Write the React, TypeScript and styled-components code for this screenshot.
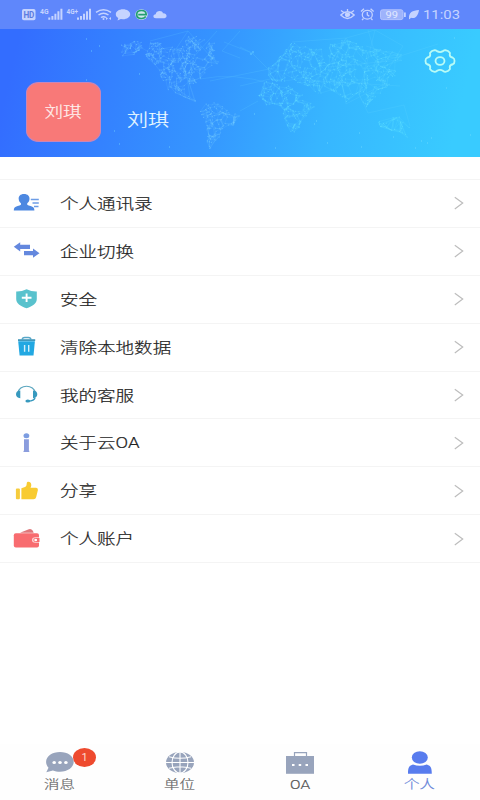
import React from 'react';
import styled, { createGlobalStyle } from 'styled-components';

const Global = createGlobalStyle`
  * { box-sizing: border-box; }
  body { margin: 0; background: #fff; font-family: Roboto, "Noto Sans CJK SC", sans-serif; }
`;

const Screen = styled.div`
  width: 480px;
  height: 800px;
  display: flex;
  flex-direction: column;
  background: #fff;
  overflow: hidden;
`;

const StatusBar = styled.div`
  height: 29px;
  flex: none;
  background: #5f87fb;
`;

const StatusArt = styled.svg`
  display: block;
  width: 480px;
  height: 29px;
`;

const Header = styled.header`
  position: relative;
  height: 128px;
  flex: none;
  display: flex;
  align-items: flex-start;
  padding: 53px 24px 0 26px;
  background: linear-gradient(103deg, #336dff 4%, #3596ff 45%, #37b6ff 68%, #39cbff 94%);
`;

const MapArt = styled.svg`
  position: absolute;
  inset: 0;
  width: 480px;
  height: 128px;
`;

const Avatar = styled.div`
  position: relative;
  width: 75px;
  height: 60px;
  border-radius: 13px / 11px;
  background: #f87978;
  border: 1px solid #c886b8;
  display: flex;
  align-items: center;
  justify-content: center;
`;

const Wide = styled.span<{ $size: number; $x?: number; $color: string; $origin?: string }>`
  display: inline-block;
  font-size: ${p => p.$size}px;
  line-height: 1;
  font-weight: 300;
  -webkit-text-stroke: 0.2px currentColor;
  white-space: nowrap;
  color: ${p => p.$color};
  transform: scaleX(${p => p.$x ?? 1.235});
  transform-origin: ${p => p.$origin ?? 'left'} center;
`;

const UserName = styled.div`
  position: relative;
  margin: 30px 0 0 26px;
  line-height: 1;
`;

const SettingsButton = styled.button`
  position: relative;
  width: 32px;
  height: 26px;
  margin: -34px 0 0 auto;
  padding: 0;
  border: 0;
  background: none;
`;

const Menu = styled.ul`
  list-style: none;
  margin: 22px 0 0;
  padding: 0;
  border-top: 1px solid #f4f4f4;
`;

const Row = styled.li`
  height: 47.9px;
  display: flex;
  align-items: center;
  padding: 0 16px 0 12px;
  border-bottom: 1px solid #f4f4f4;
`;

const RowIcon = styled.span`
  display: flex;
  width: 30px;
  height: 24px;
  margin-right: 18px;
`;

const RowLabel = styled.div`
  display: flex;
  padding-top: 2px;
`;

const Chevron = styled.svg`
  width: 10px;
  height: 14px;
  margin-left: auto;
`;

const Tabs = styled.nav`
  margin-top: auto;
  height: 56px;
  flex: none;
  display: grid;
  grid-template-columns: repeat(4, 1fr);
  background: #fefefe;
`;

const Tab = styled.div`
  position: relative;
  display: flex;
  flex-direction: column;
  align-items: center;
  padding-top: 6px;
  gap: 4px;
`;

const TabIcon = styled.svg`
  width: 30px;
  height: 25px;
`;

const Badge = styled.span`
  position: absolute;
  left: 73px;
  top: 4px;
  width: 23px;
  height: 19px;
  border-radius: 50%;
  background: #ee4a2e;
  color: #ffd9d0;
  font-size: 11px;
  line-height: 19px;
  text-align: center;
`;

type Pt = [number, number];

const continents: { shape: Pt[]; count: number; color: string }[] = [
  { shape: [[119, 44], [138, 39], [160, 43], [178, 49], [190, 34], [214, 43], [218, 63], [205, 74], [198, 84], [190, 88], [182, 93], [200, 103], [188, 101], [168, 90], [160, 76], [157, 66], [140, 58], [122, 57]], count: 340, color: '#78ccff' },
  { shape: [[199, 107], [212, 101], [226, 108], [240, 116], [232, 128], [220, 136], [213, 143], [209, 152], [206, 140], [207, 126], [199, 116]], count: 110, color: '#78cfff' },
  { shape: [[265, 69], [275, 62], [291, 42], [312, 49], [344, 40], [372, 46], [403, 55], [395, 76], [386, 89], [372, 100], [368, 113], [359, 95], [346, 104], [337, 91], [318, 94], [302, 83], [270, 81]], count: 460, color: '#65e0ff' },
  { shape: [[257, 99], [265, 81], [287, 85], [304, 96], [314, 107], [302, 120], [298, 132], [290, 133], [284, 119], [278, 107], [262, 105]], count: 150, color: '#65e0ff' },
  { shape: [[374, 120], [388, 122], [397, 113], [410, 126], [407, 138], [396, 131], [382, 129]], count: 28, color: '#64e6ff' },
];

function inside([x, y]: Pt, shape: Pt[]) {
  let hit = false;
  for (let i = 0, j = shape.length - 1; i < shape.length; j = i++) {
    const [xi, yi] = shape[i];
    const [xj, yj] = shape[j];
    if (yi > y !== yj > y && x < ((xj - xi) * (y - yi)) / (yj - yi) + xi) hit = !hit;
  }
  return hit;
}

function makeRandom(seed: number) {
  let s = seed;
  return () => {
    s = (s * 16807) % 2147483647;
    return s / 2147483647;
  };
}

function buildNetwork() {
  const random = makeRandom(4217);
  return continents.map(({ shape, count, color }) => {
    const xs = shape.map(p => p[0]);
    const ys = shape.map(p => p[1]);
    const x0 = Math.min(...xs), x1 = Math.max(...xs), y0 = Math.min(...ys), y1 = Math.max(...ys);
    const points: Pt[] = [];
    while (points.length < count) {
      const p: Pt = [x0 + random() * (x1 - x0), y0 + random() * (y1 - y0)];
      if (inside(p, shape)) points.push(p);
    }
    let dots = '';
    let links = '';
    points.forEach(([x, y], i) => {
      dots += `M${x.toFixed(1)} ${y.toFixed(1)}h.8`;
      const near = points
        .map((q, j) => ({ q, j, d: Math.hypot(q[0] - x, q[1] - y) }))
        .filter(n => n.j !== i)
        .sort((a, b) => a.d - b.d);
      for (const { q } of [near[3], near[9]]) {
        links += `M${x.toFixed(1)} ${y.toFixed(1)}L${q[0].toFixed(1)} ${q[1].toFixed(1)}`;
      }
    });
    return { dots, links, color };
  });
}

const network = buildNetwork();

const WorldMap = () => (
  <MapArt viewBox="0 29 480 128" aria-hidden>
    {network.map((n, i) => (
      <g key={i} fill="none" stroke={n.color}>
        <path d={n.links} strokeWidth=".5" opacity=".25" />
        <path d={n.dots} strokeWidth=".9" opacity=".62" />
      </g>
    ))}
    <g fill="none" stroke="#6cdcff" strokeWidth=".5" opacity=".33">
      <path d="M188 31L176 49L187 76L190 98M150 41L188 31L217 64M240 31L222 51L240 58M217 31L190 61M200 79Q234 72 272 84M210 81L274 68M224 42L252 53L272 73M240 47L254 54M240 86L270 79" />
      <path d="M292 42L346 38L328 67L400 60M346 38L375 30L359 94M375 30L403 46L380 82M302 80L400 86M318 94L346 38L379 78M366 46L402 57M359 94L368 113L404 105M404 105L410 126M340 72L346 104L386 83M368 30L378 63L438 44M240 111L258 101" />
    </g>
    <path d="M86 39h1M91 51h1M99 46h1M86 80h1M139 74h1M114 131h1M119 144h1M169 147h1M275 148h1M361 147h1M327 143h1M415 148h1M427 143h1M431 138h1M421 141h1M254 114h1M314 124h1M316 121h1M252 52h2M250 54h2M359 133h1M393 137h1M454 38h1M446 88h1M470 135h1" stroke="#7ae0ff" strokeWidth="1" opacity=".7" />
  </MapArt>
);

const StatusIcons = () => (
  <StatusArt viewBox="0 0 480 29" fill="#c5d3ff" fontFamily="Roboto, sans-serif">
    <rect x="22" y="9" width="13.5" height="11.3" rx="1.8" />
    <text x="23.4" y="17.800" fontSize="8.6" fontWeight="700" fill="#5c7be0" textLength="11" lengthAdjust="spacingAndGlyphs">HD</text>
    <text x="40" y="13.6" fontSize="6.5" fontWeight="700" textLength="8.5" lengthAdjust="spacingAndGlyphs">4G</text>
    <path d="M48.3 17.5h2v2.3h-2zM51.4 16h2v3.8h-2zM54.4 13.8h2v6h-2zM57.4 11.2h2v8.6h-2zM60.4 8.7h2v11.1h-2z" />
    <text x="66.5" y="13.6" fontSize="6.5" fontWeight="700" textLength="11.5" lengthAdjust="spacingAndGlyphs">4G+</text>
    <path d="M77 17.5h2v2.3h-2zM80 16h2v3.8h-2zM83 13.8h2v6h-2zM86 11.2h2v8.6h-2zM89 8.7h2v11.1h-2z" />
    <g fill="none" stroke="#c5d3ff" strokeWidth="1.5">
      <path d="M96 12.3q7.500-5 15 0M98.500 15q5-3.500 10 0M101 17.500q2.500-1.700 5 0" />
    </g>
    <circle cx="103.500" cy="19" r="1" />
    <path d="M106 17l2 1.500-2 1.500M111 17l-2 1.500 2 1.500" />
    <path d="M123 9.200c4 0 7.200 2.200 7.200 5s-3.200 5-7.200 5l-2.200-.2-3.300 1.500.8-2.500c-1.500-.8-2.500-2.200-2.500-3.800 0-2.800 3.200-5 7.200-5z" />
    <ellipse cx="141.500" cy="14.500" rx="6.200" ry="5.200" fill="#d0e8ee" />
    <path d="M145.800 16.500q-1.500 2-4.300 2c-3 0-4.800-1.700-4.800-4s1.800-4 4.800-4 4.700 1.500 4.700 4.200h-8" fill="none" stroke="#239e72" strokeWidth="1.700" />
    <path d="M156 18.200c-3.500 0-3.300-3.800-.3-4 .4-4 6.700-4.300 7.300-.8 4-.5 4.800 4.500 1.500 4.800z" />
    <g fill="none" stroke="#c5d3ff" strokeWidth="1.300">
      <path d="M340.800 15q6.700-6.500 13.400 0q-6.700 7-13.400 0zM341 10.500l2.500 1.700M347.500 9v2M354 10.500l-2.500 1.700" />
      <ellipse cx="367.300" cy="14.700" rx="5" ry="4.400" /><path d="M367.300 12v2.800l2 1.500M361 11.500l3-2.700M373.600 11.500l-3-2.700M363.500 18.500l-1.500 1.500M371 18.500l1.500 1.500" />
    </g>
    <ellipse cx="347.500" cy="14.700" rx="2.600" ry="2.300" />
    <rect x="380.500" y="9.800" width="22.500" height="9.800" rx="2" fill="#9eb3fb" stroke="#b2c3ff" />
    <path d="M404 12.500h1.800v4.600H404zM409 19c-.5-7 3.500-8.500 10-9-.8 5.500-3.500 9.200-8 7.700l-1.500 1.500z" />
    <text x="385.500" y="18" fontSize="9.500" fill="#e1e8ff" textLength="12.500" lengthAdjust="spacingAndGlyphs">99</text>
    <text x="423" y="19.400" fontSize="13.500" textLength="37" lengthAdjust="spacingAndGlyphs">11:03</text>
  </StatusArt>
);

const Glyph = ({ children }: { children: React.ReactNode }) => (
  <svg width="30" height="24" viewBox="0 0 30 24">{children}</svg>
);

const items: { label: string; icon: React.ReactNode }[] = [
  {
    label: '个人通讯录',
    icon: <Glyph><path d="M12 3c3.800 0 5.700 2.200 5.500 5-.1 2.300-1.300 3.300-2.200 4.300-.6 1.500.3 2 3.300 2.600 2.800.8 3.800 1.800 3.800 4.500H1.800c0-2.700 1-3.700 3.800-4.500 3-.6 3.900-1.100 3.300-2.600-.9-1-2.100-2-2.200-4.300C6.500 5.200 8.200 3 12 3z" fill="#4d88e1" /><path d="M18.800 8.500h8M20.500 12h6.300M22 15.500h4.500" stroke="#6d9de6" strokeWidth="1.300" /></Glyph>,
  },
  {
    label: '企业切换',
    icon: <Glyph><path d="M1.800 7.700L8.200 3.200v2.500H18v4.200H8.200v2.500zM27.500 14.200L21 18.700v-2.400h-9v-4.200h9V9.600z" fill="#6488de" /></Glyph>,
  },
  {
    label: '安全',
    icon: <Glyph><path d="M14.600 2.200q5 2.500 10.200 2.300V12c0 4.500-4 7.200-10.200 9.300C8.200 19.200 4.200 16.500 4.200 12V4.500q5.400.2 10.400-2.300z" fill="#59c2cd" /><path d="M14.600 6.500v8.500M9.800 10.800h9.700" stroke="#fff" strokeWidth="1.900" /></Glyph>,
  },
  {
    label: '清除本地数据',
    icon: <Glyph><path d="M10.300 4.500q0-2 2.500-2h3.500q2.500 0 2.500 2" fill="none" stroke="#58a7c8" strokeWidth="1.500" /><path d="M6 4.200h17.200v1.800H6z" fill="#4198bb" /><path d="M6.200 6.200h16.700l-1.400 14.300H7.600z" fill="#22a8e2" /><path d="M12.600 10v6.800M16.700 10v6.800" stroke="#d3f0fc" strokeWidth="1.400" /></Glyph>,
  },
  {
    label: '我的客服',
    icon: <Glyph><path d="M6 10C6.500 1 22.500 1 23.300 10" fill="none" stroke="#5ba6bf" strokeWidth="1.200" /><path d="M8.300 7.500v7.700C5.500 15.200 4 13.500 4 11.300s1.600-3.800 4.300-3.800zM21 7.500v7.700c2.800 0 4.300-1.700 4.300-3.900S23.700 7.500 21 7.500z" fill="#3799be" /><path d="M23.200 14.500q-.8 3.300-7 3.700" fill="none" stroke="#3799be" strokeWidth="1.200" /><ellipse cx="15.800" cy="18" rx="2.400" ry="1.500" fill="#3799be" /></Glyph>,
  },
  {
    label: '关于云OA',
    icon: <Glyph><ellipse cx="14.400" cy="4.700" rx="2.900" ry="2.500" fill="#7c9de1" /><path d="M12 8.300h4.900v11.500h.4v1.100h-5.800v-1.100h.5z" fill="#8b9ddd" /></Glyph>,
  },
  {
    label: '分享',
    icon: <Glyph><rect x="3.900" y="9.500" width="4" height="10.800" rx="1" fill="#f6cc3c" /><path d="M9.400 9.300l3.600-1.200c1.800-.8 1.600-2.700 1.800-4 .2-2 4.500-1.700 4.500 1.800 0 1.200-.4 1.900-.8 2.800h5.700q2 .2 1.700 2.200L24.200 18q-.5 2.300-2.700 2.300H9.400z" fill="#f8cb32" /></Glyph>,
  },
  {
    label: '个人账户',
    icon: <Glyph><path d="M8 5.700l8.800-3.500q2.600-.8 4 1.500l.9 2z" fill="#df777b" /><rect x="1.800" y="6.200" width="25.200" height="14.200" rx="2" fill="#f86c70" /><path d="M27.500 10.300h-4.200q-3.300 0-3.300 2.700t3.300 2.700h4.200z" fill="#fff" opacity=".75" /><path d="M27.500 11h-4.200q-2 0-2 2t2 2h4.200z" fill="#f86c70" /><ellipse cx="23.700" cy="13" rx="1.400" ry="1.200" fill="#fff" /></Glyph>,
  },
];

const App = () => (
  <Screen>
    <Global />
    <StatusBar><StatusIcons /></StatusBar>
    <Header>
      <WorldMap />
      <Avatar><Wide $size={15} $color="#fff0ee" $origin="center">刘琪</Wide></Avatar>
      <UserName><Wide $size={17} $color="#effdff">刘琪</Wide></UserName>
      <SettingsButton aria-label="设置">
        <svg width="32" height="26" viewBox="-.6 -.6 33.2 27.200" fill="none" stroke="#b8fbf6" strokeWidth="1.900" strokeLinejoin="round">
          <path d="M10.500 1.600Q11.700 1.600 12.800 2.700Q16 4.600 19.200 2.700Q20.300 1.600 21.500 1.600Q24.800 2.200 26.300 4.300Q26.600 5 26.200 6.500Q26 8.800 29.500 9.600Q31.200 10.300 31.200 13T29.500 16.400Q26 17.200 26.200 19.500Q26.600 21 26.300 21.700Q24.800 23.800 21.500 24.400Q20.300 24.400 19.200 23.300Q16 21.400 12.800 23.300Q11.700 24.400 10.500 24.400Q7.200 23.800 5.700 21.700Q5.400 21 5.800 19.500Q6 17.200 2.500 16.400Q.8 15.700 .8 13T2.500 9.600Q6 8.800 5.800 6.500Q5.400 5 5.700 4.300Q7.200 2.200 10.500 1.600z" />
          <ellipse cx="16" cy="13" rx="4.700" ry="4" />
        </svg>
      </SettingsButton>
    </Header>
    <Menu>
      {items.map(item => (
        <Row key={item.label}>
          <RowIcon>{item.icon}</RowIcon>
          <RowLabel><Wide $size={15} $color="#222">{item.label}</Wide></RowLabel>
          <Chevron viewBox="0 0 10 14" fill="none" stroke="#bdbdbd" strokeWidth="1.200"><path d="M.8 1.200L8.700 7.100L.8 13" /></Chevron>
        </Row>
      ))}
    </Menu>
    <Tabs>
      <Tab>
        <TabIcon viewBox="0 0 30 25"><path d="M15 2c7.700 0 13.700 4.200 13.700 9.800S22.700 21.700 15 21.700c-2.700 0-5-.4-7.100-1.300L1.300 22.300l2.200-4.500C2 16 1.100 14.200 1.100 11.800 1.100 6.200 7.300 2 15 2z" fill="#98a4bc" /><g fill="#fff"><ellipse cx="9.200" cy="12.500" rx="1.800" ry="1.500" /><ellipse cx="15" cy="12.500" rx="1.800" ry="1.500" /><ellipse cx="20.900" cy="12.500" rx="1.800" ry="1.500" /></g></TabIcon>
        <Badge>1</Badge>
        <Wide $size={12.500} $color="#666" $origin="center">消息</Wide>
      </Tab>
      <Tab>
        <TabIcon viewBox="0 0 30 25"><ellipse cx="15" cy="12.500" rx="14" ry="10.500" fill="#98a4bc" /><g fill="none" stroke="#fff" strokeWidth="1.100"><path d="M15 2v21M1 12.500h28M4 6.700q11 3.200 22 0M4 18.300q11-3.200 22 0" /><ellipse cx="15" cy="12.500" rx="8" ry="10.500" /></g></TabIcon>
        <Wide $size={12.500} $color="#666" $origin="center">单位</Wide>
      </Tab>
      <Tab>
        <TabIcon viewBox="0 0 30 25"><path d="M9.500 6V2.600h12V6" fill="none" stroke="#98a4bc" strokeWidth="1.200" /><path d="M1 6h28v17.800H1z" fill="#98a4bc" /><path d="M7 14h2.500v2H7zM13.700 14h2.500v2h-2.500zM20.500 14H23v2h-2.500z" fill="#fff" /></TabIcon>
        <Wide $size={12.500} $color="#555" $origin="center">OA</Wide>
      </Tab>
      <Tab>
        <TabIcon viewBox="0 0 30 25"><ellipse cx="14.800" cy="7.500" rx="8" ry="6.200" fill="#587cee" /><path d="M8 14.500q7 2.500 13.700 0c3.500 1.300 5.100 2 5.100 9.300H3c0-7.300 1.500-8 5-9.300z" fill="#587cee" /></TabIcon>
        <Wide $size={12.500} $color="#6684d8" $origin="center">个人</Wide>
      </Tab>
    </Tabs>
  </Screen>
);

export default App;
